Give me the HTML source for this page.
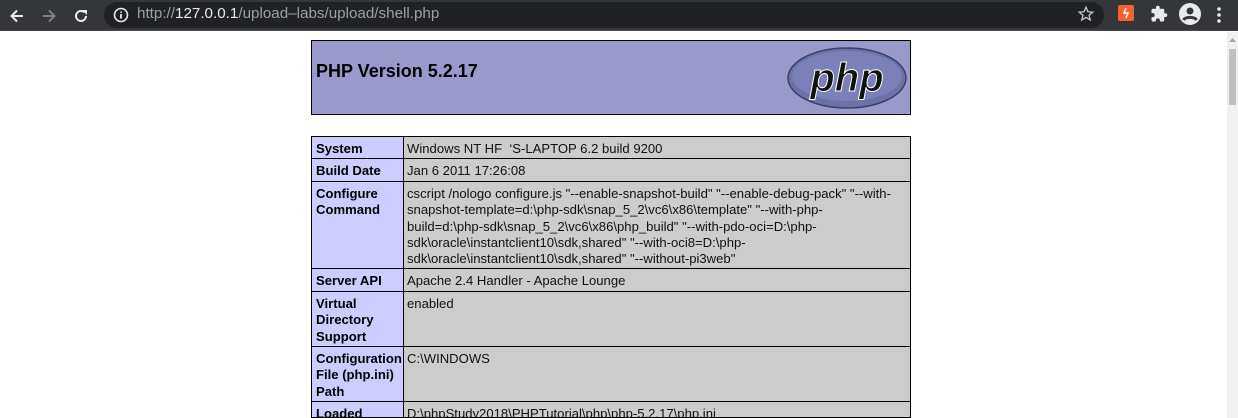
<!DOCTYPE html>
<html style="overflow:hidden;height:418px"><head><meta charset="utf-8"><style>
*{margin:0;padding:0;box-sizing:border-box}
body{width:1238px;height:418px;overflow:hidden;background:#fff;font-family:"Liberation Sans",sans-serif;position:relative}
#bar{position:absolute;left:0;top:0;width:1238px;height:31px;background:#35363a;border-bottom:1px solid #4a4a4e}
#url{position:absolute;left:104px;top:2px;width:1000px;height:26px;border-radius:13px;background:#202124}
#urltext{position:absolute;left:137px;top:5px;font-size:15.2px;color:#9aa0a6;white-space:nowrap}
#urltext b{color:#e8eaed;font-weight:normal}
.a{position:absolute}
#sb{position:absolute;left:1227px;top:32px;width:11px;height:386px;background:#f1f1f1}
#sbt{position:absolute;left:1229px;top:49px;width:7px;height:56px;background:#c1c1c1}
#hdr{position:absolute;left:311px;top:40px;width:600px;height:75px;background:#9999cc;border:1px solid #000}
#hdr h1{position:absolute;left:4px;top:20px;font-size:18px;font-weight:bold;color:#000}
.r{position:absolute;left:311px;width:600px;border:1px solid #000;border-top:none;display:flex;font-size:13.1px;line-height:16.3px;color:#000}
.r .l{width:92px;background:#ccccff;border-right:1px solid #000;font-weight:bold;padding:4px 4px 3px;white-space:nowrap}
.r .v{flex:1;background:#cccccc;padding:4px 3px 3px;white-space:nowrap;color:#111}
</style></head><body>
<div id="bar">
<svg class="a" style="left:8px;top:7px" width="18" height="18" viewBox="0 0 18 18"><path d="M15 9H4M9 3.5L3.5 9 9 14.5" stroke="#e8eaed" stroke-width="2" fill="none"/></svg>
<svg class="a" style="left:40px;top:7px" width="18" height="18" viewBox="0 0 18 18"><path d="M3 9h11M9 3.5L14.5 9 9 14.5" stroke="#7d7f83" stroke-width="2" fill="none"/></svg>
<svg class="a" style="left:72px;top:7px" width="18" height="18" viewBox="0 0 18 18"><path d="M14 9a5 5 0 1 1-1.5-3.6" stroke="#e8eaed" stroke-width="2" fill="none"/><path d="M10 3h5v5z" fill="#e8eaed"/></svg>
<div id="url"></div>
<svg class="a" style="left:113px;top:7px" width="16" height="16" viewBox="0 0 16 16"><circle cx="8" cy="8" r="6.5" stroke="#e8eaed" stroke-width="1.6" fill="none"/><path d="M8 7v4.5M8 4.5v1.2" stroke="#e8eaed" stroke-width="1.8"/></svg>
<div id="urltext">http://<b>127.0.0.1</b>/upload–labs/upload/shell.php</div>
<svg class="a" style="left:1077px;top:5px" width="18" height="18" viewBox="0 0 24 24"><path d="M12 3l2.6 6 6.4.5-4.9 4.2 1.5 6.3L12 16.6 6.4 20l1.5-6.3L3 9.5 9.4 9z" stroke="#c4c7c5" stroke-width="1.8" fill="none"/></svg>
<div class="a" style="left:1118px;top:5px;width:16px;height:16px;background:#f4622e;border-radius:2px"></div>
<svg class="a" style="left:1118px;top:5px" width="16" height="16" viewBox="0 0 16 16"><path d="M8 3L6 8h4l-2 5" stroke="#fff" stroke-width="1.5" fill="none"/></svg>
<svg class="a" style="left:1150px;top:5px" width="18" height="18" viewBox="0 0 24 24"><path d="M20.5 11H19V7a2 2 0 0 0-2-2h-4V3.5a2.5 2.5 0 0 0-5 0V5H4a2 2 0 0 0-2 2v3.8h1.5a2.7 2.7 0 0 1 0 5.4H2V20a2 2 0 0 0 2 2h3.8v-1.5a2.7 2.7 0 0 1 5.4 0V22H17a2 2 0 0 0 2-2v-4h1.5a2.5 2.5 0 0 0 0-5z" fill="#e8eaed"/></svg>
<svg class="a" style="left:1178px;top:2px" width="24" height="24" viewBox="0 0 24 24"><circle cx="12" cy="12" r="11" fill="#e8eaed"/><circle cx="12" cy="9" r="3.5" fill="#35363a"/><path d="M5.5 18c2-3.5 11-3.5 13 0" stroke="#35363a" stroke-width="3" fill="none"/></svg>
<svg class="a" style="left:1216px;top:6px" width="6" height="18" viewBox="0 0 6 18"><circle cx="3" cy="3" r="1.8" fill="#e8eaed"/><circle cx="3" cy="9" r="1.8" fill="#e8eaed"/><circle cx="3" cy="15" r="1.8" fill="#e8eaed"/></svg>
</div>
<div id="sb"></div><div id="sbt"></div>
<svg class="a" style="left:1229px;top:37px" width="7" height="6"><path d="M0 5L3.5 1 7 5z" fill="#a3a3a3"/></svg>
<div id="hdr"><h1>PHP Version 5.2.17</h1>
<svg class="a" style="left:474px;top:5px" width="122" height="64" viewBox="0 0 122 64"><ellipse cx="61" cy="32" rx="59" ry="30" fill="#6c71a8" stroke="#3c3f6a" stroke-width="1.5"/><ellipse cx="61" cy="30" rx="55" ry="25" fill="#7b80b8"/><text x="61" y="45" text-anchor="middle" font-family="Liberation Sans,sans-serif" font-size="40" font-style="italic" font-weight="bold" fill="#111" stroke="#fff" stroke-width="1">php</text></svg>
</div>
<div class="r" style="top:136px;height:23px;border-top:1px solid #000"><div class="l">System</div><div class="v">Windows NT HF &nbsp;‘S-LAPTOP 6.2 build 9200</div></div>
<div class="r" style="top:159px;height:23px"><div class="l">Build Date</div><div class="v">Jan 6 2011 17:26:08</div></div>
<div class="r" style="top:182px;height:87px"><div class="l">Configure<br>Command</div><div class="v">cscript /nologo configure.js "--enable-snapshot-build" "--enable-debug-pack" "--with-<br>snapshot-template=d:\php-sdk\snap_5_2\vc6\x86\template" "--with-php-<br>build=d:\php-sdk\snap_5_2\vc6\x86\php_build" "--with-pdo-oci=D:\php-<br>sdk\oracle\instantclient10\sdk,shared" "--with-oci8=D:\php-<br>sdk\oracle\instantclient10\sdk,shared" "--without-pi3web"</div></div>
<div class="r" style="top:269px;height:23px"><div class="l">Server API</div><div class="v">Apache 2.4 Handler - Apache Lounge</div></div>
<div class="r" style="top:292px;height:55px"><div class="l">Virtual<br>Directory<br>Support</div><div class="v">enabled</div></div>
<div class="r" style="top:347px;height:55px"><div class="l">Configuration<br>File (php.ini)<br>Path</div><div class="v">C:\WINDOWS</div></div>
<div class="r" style="top:402px;height:16px"><div class="l">Loaded</div><div class="v">D:\phpStudy2018\PHPTutorial\php\php-5.2.17\php.ini</div></div>
</body></html>
